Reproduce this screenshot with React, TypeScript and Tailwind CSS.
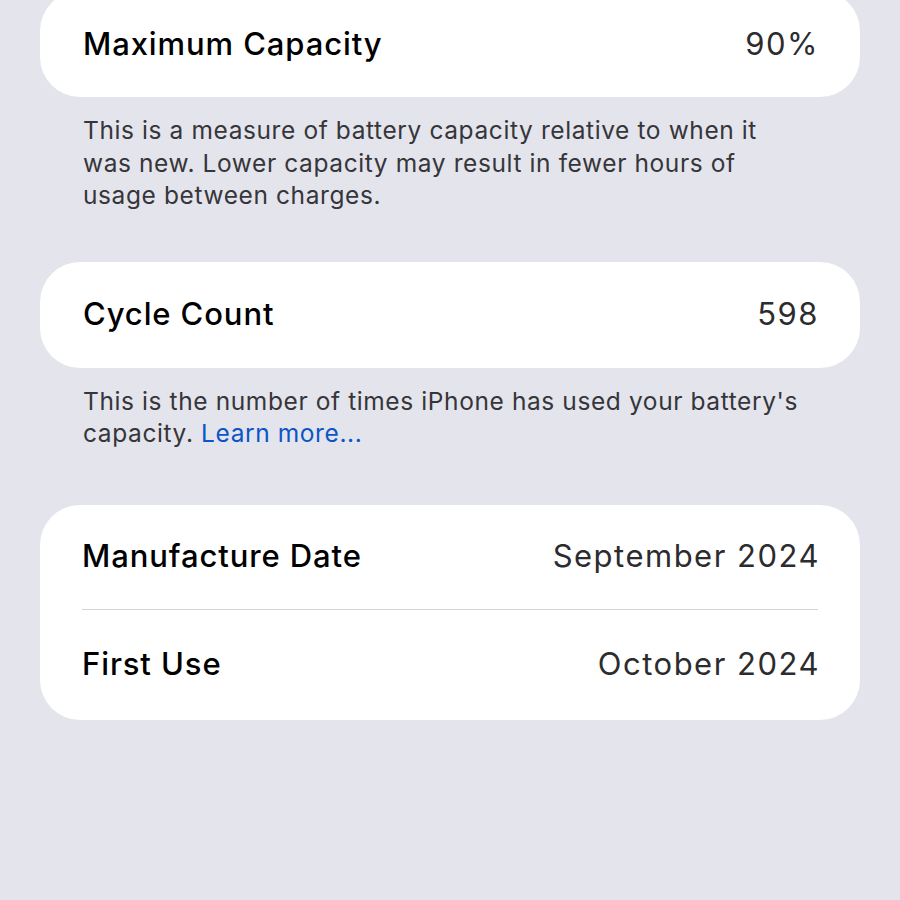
import React from 'react'

const font = { fontFamily: 'Inter, "Noto Sans", sans-serif' }

function Label({ children }: { children: React.ReactNode }) {
  return <span className="text-[31px] font-medium text-black tracking-[0.9px]">{children}</span>
}

function Value({ children }: { children: React.ReactNode }) {
  return <span className="text-[31px] text-[#2c2c2e] tracking-[1.5px] -mr-[2px]">{children}</span>
}

function Note({ children }: { children: React.ReactNode }) {
  return (
    <p className="px-[83px] pt-[17px] text-[24.5px] leading-[32.5px] text-[#36363a] tracking-[0.6px]">
      {children}
    </p>
  )
}

export default function App() {
  return (
    <div className="w-[900px] h-[900px] overflow-hidden bg-[#e4e4ec]" style={font}>
      <div className="px-[40px] -mt-[9px]">
        {/* Maximum capacity */}
        <div className="bg-white rounded-[40px] px-[43px]">
          <div className="flex items-center justify-between h-[106px]">
            <Label>Maximum Capacity</Label>
            <Value>90%</Value>
          </div>
        </div>
      </div>
      <Note>
        This is a measure of battery capacity relative to when it
        <br />
        was new. Lower capacity may result in fewer hours of
        <br />
        usage between charges.
      </Note>

      {/* Cycle count */}
      <div className="px-[40px] mt-[50px]">
        <div className="bg-white rounded-[40px] px-[43px]">
          <div className="flex items-center justify-between h-[106px]">
            <Label>Cycle Count</Label>
            <Value>598</Value>
          </div>
        </div>
      </div>
      <Note>
        This is the number of times iPhone has used your battery's
        <br />
        capacity. <span className="text-[#0b55c6]">Learn more...</span>
      </Note>

      {/* Dates */}
      <div className="px-[40px] mt-[55px]">
        <div className="bg-white rounded-[40px] px-[42px]">
          <div className="flex items-center justify-between h-[105px] border-b border-[#d4d4d8]">
            <Label>Manufacture Date</Label>
            <Value>September 2024</Value>
          </div>
          <div className="flex items-center justify-between h-[110px]">
            <Label>First Use</Label>
            <Value>October 2024</Value>
          </div>
        </div>
      </div>
    </div>
  )
}
